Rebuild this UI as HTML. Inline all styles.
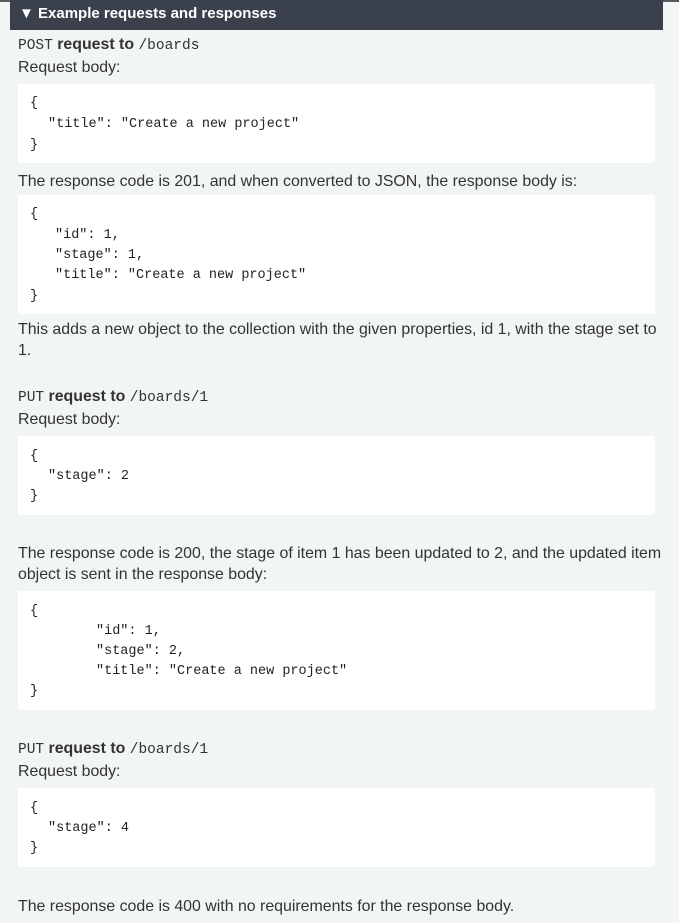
<!DOCTYPE html>
<html><head><style>
body{margin:0;width:679px;height:923px;background:#f2f5f6;position:relative;overflow:hidden;font-family:"Liberation Sans",sans-serif;color:#333;}
.top{position:absolute;left:0;top:0;width:679px;height:2px;background:#555a60}
.hd{position:absolute;left:10px;top:0;width:653px;height:30px;background:#3b414c;color:#fff;font-weight:bold;font-size:15px;line-height:28px;padding-left:9px;box-sizing:border-box}
.t{position:absolute;left:18px;font-size:15.9px;line-height:21px;white-space:nowrap;color:#333}
.m{font-family:"Liberation Mono",monospace;font-size:14.5px}
.box{position:absolute;left:18px;width:637px;background:#fff;border-radius:2px}
.c{position:absolute;font-family:"Liberation Mono",monospace;font-size:13.5px;line-height:20px;white-space:pre;color:#222}
</style></head><body>
<div class="top"></div>
<div class="hd">▼ Example requests and responses</div>

<div class="t" style="top:34px"><span class="m">POST</span> <b>request to</b> <span class="m">/boards</span></div>
<div class="t" style="top:57px">Request body:</div>
<div class="box" style="top:84px;height:79px"></div>
<div class="c" style="left:30px;top:94px">{</div>
<div class="c" style="left:48px;top:115px">"title": "Create a new project"</div>
<div class="c" style="left:30px;top:136px">}</div>

<div class="t" style="top:171px">The response code is 201, and when converted to JSON, the response body is:</div>
<div class="box" style="top:195px;height:119px"></div>
<div class="c" style="left:30px;top:205px">{</div>
<div class="c" style="left:55px;top:226px">"id": 1,
"stage": 1,
"title": "Create a new project"</div>
<div class="c" style="left:30px;top:287px">}</div>

<div class="t" style="top:319px">This adds a new object to the collection with the given properties, id 1, with the stage set to</div>
<div class="t" style="top:340px">1.</div>

<div class="t" style="top:386px"><span class="m">PUT</span> <b>request to</b> <span class="m">/boards/1</span></div>
<div class="t" style="top:409px">Request body:</div>
<div class="box" style="top:436px;height:79px"></div>
<div class="c" style="left:30px;top:447px">{</div>
<div class="c" style="left:48px;top:467px">"stage": 2</div>
<div class="c" style="left:30px;top:487px">}</div>

<div class="t" style="top:543px">The response code is 200, the stage of item 1 has been updated to 2, and the updated item</div>
<div class="t" style="top:564px">object is sent in the response body:</div>
<div class="box" style="top:591px;height:119px"></div>
<div class="c" style="left:30px;top:602px">{</div>
<div class="c" style="left:96px;top:622px">"id": 1,
"stage": 2,
"title": "Create a new project"</div>
<div class="c" style="left:30px;top:682px">}</div>

<div class="t" style="top:738px"><span class="m">PUT</span> <b>request to</b> <span class="m">/boards/1</span></div>
<div class="t" style="top:761px">Request body:</div>
<div class="box" style="top:788px;height:79px"></div>
<div class="c" style="left:30px;top:799px">{</div>
<div class="c" style="left:48px;top:819px">"stage": 4</div>
<div class="c" style="left:30px;top:839px">}</div>

<div class="t" style="top:896px">The response code is 400 with no requirements for the response body.</div>
</body></html>
